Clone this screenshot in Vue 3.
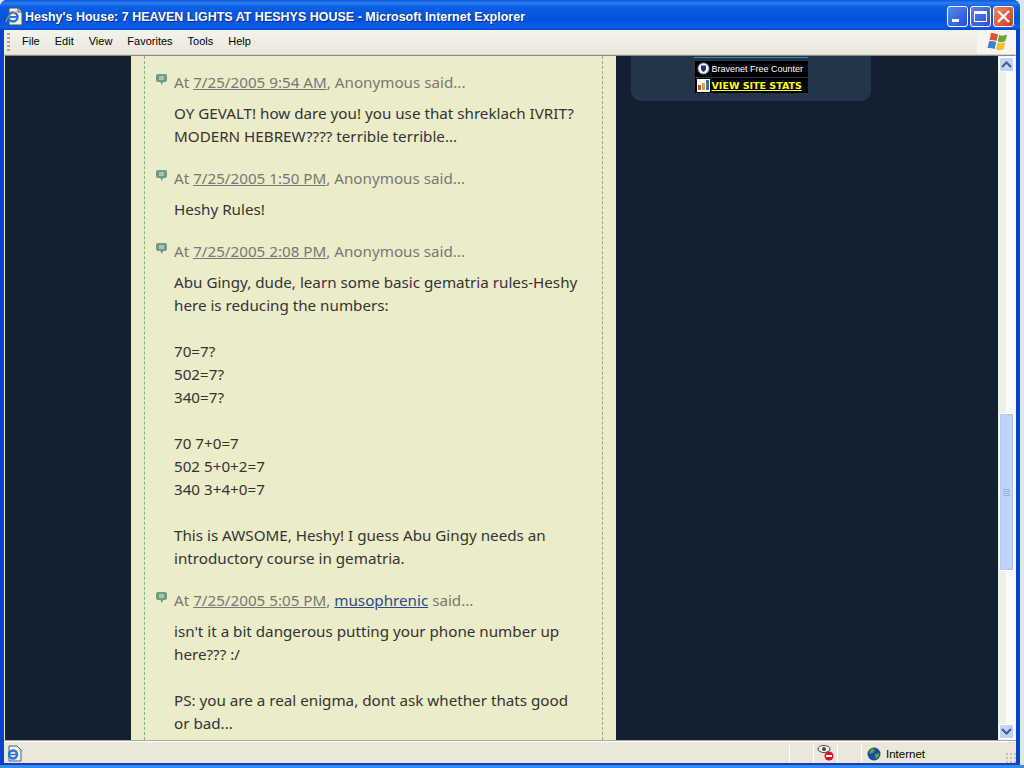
<script setup>
const comments = [
  { time: '7/25/2005 9:54 AM', author: 'Anonymous', lines: ['OY GEVALT! how dare you! you use that shreklach IVRIT?', 'MODERN HEBREW???? terrible terrible...'] },
  { time: '7/25/2005 1:50 PM', author: 'Anonymous', lines: ['Heshy Rules!'] },
  { time: '7/25/2005 2:08 PM', author: 'Anonymous', lines: ['Abu Gingy, dude, learn some basic gematria rules-Heshy', 'here is reducing the numbers:', '', '70=7?', '502=7?', '340=7?', '', '70 7+0=7', '502 5+0+2=7', '340 3+4+0=7', '', 'This is AWSOME, Heshy! I guess Abu Gingy needs an', 'introductory course in gematria.'] },
  { time: '7/25/2005 5:05 PM', author: 'musophrenic', link: true, lines: ["isn't it a bit dangerous putting your phone number up", 'here??? :/', '', 'PS: you are a real enigma, dont ask whether thats good', 'or bad...'] },
]
const menus = ['File', 'Edit', 'View', 'Favorites', 'Tools', 'Help']
</script>

<template>
  <div class="window">
    <div class="frame">
      <header class="titlebar">
        <svg class="ie" width="18" height="19" viewBox="0 0 18 19">
          <path d="M4 1h9l4 4v13H4z" fill="#f6f2df" stroke="#4a4f6a" />
          <path d="M13 1v4h4" fill="#d8d4c0" stroke="#4a4f6a" />
          <circle cx="8" cy="10" r="4.500" fill="none" stroke="#2474e4" stroke-width="2.600" />
          <path d="M3.500 10h9" stroke="#2474e4" stroke-width="1.800" />
          <path d="M1 15q1-7 12-11" fill="none" stroke="#e0a030" stroke-width="1" />
        </svg>
        <span class="title">Heshy's House: 7 HEAVEN LIGHTS AT HESHYS HOUSE - Microsoft Internet Explorer</span>
        <div class="controls">
          <span class="ctl"><i class="min"></i></span>
          <span class="ctl"><i class="max"></i></span>
          <span class="ctl close">
            <svg width="15" height="15" viewBox="0 0 15 15"><path d="M2 2l11 11M13 2L2 13" stroke="#fff" stroke-width="2.400" /></svg>
          </span>
        </div>
      </header>
      <nav class="menubar">
        <span class="grip"></span>
        <span v-for="m in menus" :key="m" class="menu">{{ m }}</span>
        <span class="flag">
          <svg width="22" height="20" viewBox="0 0 22 20">
            <path d="M5 1q3-.5 7 1.500L10.500 9Q7 7.500 3.500 8z" fill="#e5532b" />
            <path d="M13.200 3q3.500 1.500 7.800-.5L19.500 9q-4 2-7.800.5z" fill="#63a93a" />
            <path d="M3.200 9q3.500-.5 7 1L8.700 17Q5 15.500 1.500 16z" fill="#3f7fd6" />
            <path d="M11.500 10.500q3.800 1.500 7.800-.5L17.800 17q-4 2-7.800.5z" fill="#f3c02b" />
          </svg>
        </span>
      </nav>
      <div class="viewport">
        <main class="page">
          <section class="post">
            <div class="dashed">
              <article v-for="c in comments" :key="c.time" class="comment">
                <p class="meta">
                  <svg class="bubble" width="11" height="12" viewBox="0 0 11 12">
                    <path d="M2 0h7a2 2 0 0 1 2 2v4a2 2 0 0 1-2 2H7.500L5.500 11 4.500 8H2a2 2 0 0 1-2-2V2a2 2 0 0 1 2-2z" fill="#6b9f83" />
                    <path d="M3 3h5M3 5h5" stroke="#e3ecd4" />
                  </svg>
                  At <a class="time">{{ c.time }}</a>, <a v-if="c.link" class="author">{{ c.author }}</a><template v-else>{{ c.author }}</template> said...
                </p>
                <p v-for="(l, i) in c.lines" :key="i" class="line">{{ l || '\u00a0' }}</p>
              </article>
            </div>
          </section>
          <aside class="side">
            <div class="box">
              <div class="rule"></div>
              <div class="counter">
                <div class="row">
                  <svg width="13" height="13" viewBox="0 0 13 13">
                    <circle cx="6.500" cy="6.500" r="5.500" fill="#fff" stroke="#888" />
                    <path d="M4 3.500h5v3.500q-.5 2-2.500 3-2-1-2.500-3z" fill="#1b2f86" />
                  </svg>
                  <span>Bravenet Free Counter</span>
                </div>
                <div class="row stats">
                  <svg width="13" height="13" viewBox="0 0 13 13">
                    <rect width="13" height="13" fill="#fff" />
                    <rect x="1" y="6" width="3" height="5" fill="#d8552a" />
                    <rect x="5" y="4" width="3" height="7" fill="#e8a52a" />
                    <rect x="9" y="1" width="3" height="10" fill="#3a6fb8" />
                  </svg>
                  <a>VIEW SITE STATS</a>
                </div>
              </div>
            </div>
          </aside>
        </main>
        <div class="scrollbar">
          <span class="btn"><svg width="11" height="7" viewBox="0 0 11 7"><path d="M1 6l4.500-4.500L10 6" fill="none" stroke="#47598a" stroke-width="2" /></svg></span>
          <div class="track">
            <div class="thumb"><i></i><i></i><i></i><i></i></div>
          </div>
          <span class="btn"><svg width="11" height="7" viewBox="0 0 11 7"><path d="M1 1l4.500 4.500L10 1" fill="none" stroke="#47598a" stroke-width="2" /></svg></span>
        </div>
      </div>
      <footer class="status">
        <svg class="small" width="16" height="17" viewBox="0 0 16 17">
          <path d="M3 1h8l4 4v11H3z" fill="#f6f2df" stroke="#4a5a8a" />
          <circle cx="7" cy="9.500" r="4" fill="none" stroke="#2474e4" stroke-width="2.400" />
          <path d="M3 9.500h8" stroke="#2474e4" stroke-width="1.600" />
        </svg>
        <span class="pane grow"></span>
        <span class="pane w24"></span>
        <span class="pane w24 privacy">
          <svg width="18" height="20" viewBox="0 0 18 20">
            <ellipse cx="7" cy="5" rx="6" ry="3.500" fill="#fff" stroke="#444" />
            <circle cx="7" cy="5" r="2" fill="#444" />
            <circle cx="12" cy="12" r="4.500" fill="#e0102a" />
            <rect x="9" y="11" width="6" height="2" fill="#fff" />
          </svg>
        </span>
        <span class="pane w24"></span>
        <span class="pane internet">
          <svg width="14" height="14" viewBox="0 0 14 14">
            <circle cx="7" cy="7" r="6.500" fill="#1f47a8" />
            <path d="M4 2q3-1 4 1l-2 3-3 1-1-2zM8 7l4-1 0 3-3 3-1-2z" fill="#4fa63a" />
          </svg>
          Internet
        </span>
        <span class="resize"></span>
      </footer>
    </div>
  </div>
</template>

<style>
html, body { margin: 0; padding: 0; overflow: hidden; }
</style>

<style scoped>
.window {
  width: 1024px; height: 768px; box-sizing: border-box; overflow: hidden;
  background: linear-gradient(#3a8ae8, #3a8ae8) left bottom / 100% 3px no-repeat, #dfe3ea;
}
.frame {
  width: 1020px; height: 765px; box-sizing: border-box;
  display: flex; flex-direction: column; overflow: hidden;
  background: #0a3fd0; border-radius: 7px 7px 0 0;
  padding: 0 4px 2px 4px;
}
.titlebar {
  height: 30px; flex: none; margin: 0 -4px; padding: 0 6px 0 5px;
  display: flex; align-items: center; gap: 2px;
  background: linear-gradient(#0a57d8 0, #2a7cf0 3px, #0b5fe4 7px, #0352dc 20px, #0a5ff0 27px, #0346c8 30px);
  box-sizing: border-box;
}
.ie { flex: none; margin-top: 2px; }
.title {
  color: #fff; font: bold 12.500px "Liberation Sans", sans-serif;
  text-shadow: 1px 1px 0 #0a2f90; white-space: nowrap; flex: 1; margin-top: 3px;
}
.controls { display: flex; gap: 2px; margin-top: 2px; }
.ctl {
  width: 21px; height: 21px; box-sizing: border-box; border: 1px solid #fff; border-radius: 3px;
  background: linear-gradient(135deg, #5a86ea, #2450d8); display: flex; align-items: center; justify-content: center; position: relative;
}
.ctl.close { background: linear-gradient(135deg, #ea8a68, #cc3a18); }
.min { width: 7px; height: 3px; background: #fff; position: absolute; left: 4px; bottom: 4px; }
.max { width: 13px; height: 11px; box-sizing: border-box; border: 1px solid #fff; border-top-width: 3px; }
.menubar {
  height: 25px; flex: none; display: flex; align-items: center; position: relative;
  background: linear-gradient(#f4f3ec, #ebe8d9); color: #000; font: 11px "Liberation Sans", sans-serif;
  padding-left: 3px; border-bottom: 1px solid #d8d4c4; padding-bottom: 1px;
  box-sizing: border-box;
}
.grip { width: 3px; height: 18px; margin-right: 12px; background: repeating-linear-gradient(#a8a59a 0 2px, transparent 2px 4px); }
.menu { margin-right: 15px; margin-top: -1px; }
.flag {
  margin-left: auto; width: 39px; height: 24px; background: #f6f5f0;
  display: flex; align-items: center; justify-content: center;
}
.viewport {
  height: 685px; flex: none; display: flex; overflow: hidden; background: #12202f;
  border-top: 1px solid #8a8a82; border-left: 1px solid #e8e6da; border-right: 1px solid #f6f5ef;
  box-sizing: border-box;
}
.page { flex: 1; min-width: 0; display: flex; overflow: hidden; padding-left: 126px; }
.post { width: 485px; flex: none; background: #ececc9; padding: 0 13px; box-sizing: border-box; }
.dashed {
  height: 100%; border: 1px dashed #6fb98a; border-width: 0 1px; padding: 15px 18px 0 29px; box-sizing: border-box; overflow: hidden;
}
.comment { margin-bottom: 19px; font: 15.200px/23px "Noto Sans", "Open Sans", sans-serif; color: #333; }
.comment p { margin: 0; white-space: nowrap; }
.meta { color: #777; margin-bottom: 8px !important; position: relative; }
.bubble { position: absolute; left: -18px; top: 3px; }
.time { color: #777; text-decoration: underline; }
.author { color: #2a4a8a; text-decoration: underline; }
.side { margin-left: 15px; width: 240px; flex: none; }
.box {
  height: 45px; background: #24354a; border-radius: 0 0 10px 10px; display: flex; flex-direction: column; align-items: center;
}
.rule { width: 114px; height: 1px; background: #3a8ab0; margin-top: 1px; }
.counter { width: 113px; height: 32px; margin-top: 3px; background: #000; display: flex; flex-direction: column; }
.row { display: flex; align-items: center; gap: 2px; padding-left: 2px; height: 16px; color: #fff; font: 9px "Liberation Sans", sans-serif; white-space: nowrap; }
.row.stats { border-top: 1px solid #24354a; }
.stats a { color: #ff0; font: bold 9.500px "DejaVu Sans", sans-serif; text-decoration: underline; }
.scrollbar { width: 17px; flex: none; background: linear-gradient(90deg, #f0efe8 0 50%, #fafaf6 50%); display: flex; flex-direction: column; padding: 1px 0; box-sizing: border-box; }
.btn {
  height: 15px; width: 15px; margin: 0 1px; flex: none; box-sizing: border-box; border: 1px solid #fff; border-radius: 2px; background: #c2d3fb;
  display: flex; align-items: center; justify-content: center;
}
.track { flex: 1; padding-top: 341px; }
.thumb {
  width: 15px; height: 158px; margin: 0 1px; box-sizing: border-box; border: 1px solid #fff; border-radius: 2px; background: #c2d3fb; box-shadow: inset 0 0 0 1px #b4c8f8;
  display: flex; flex-direction: column; align-items: center; justify-content: center; gap: 1px;
}
.thumb i { width: 7px; height: 1px; background: #8eaef5; }
.status {
  height: 23px; flex: none; display: flex; align-items: center; background: #ebe8d9; font: 11.500px "Liberation Sans", sans-serif; color: #000; box-sizing: border-box;
  border-top: 1px solid #aca899; box-shadow: inset 0 1px 0 #fff; position: relative; padding-top: 3px;
}
.small { margin-left: 2px; flex: none; }
.pane { height: 18px; border-left: 1px solid #fff; display: flex; align-items: center; box-sizing: border-box; }
.pane.grow { flex: 1; border-left: 0; }
.w24 { width: 24px; justify-content: center; flex: none; }
.internet { width: 155px; padding-left: 5px; gap: 5px; flex: none; }
.resize { position: absolute; right: 0; bottom: 0; width: 11px; height: 11px; background: radial-gradient(circle, #c4c0ae 1px, transparent 1.200px) 0 0 / 4px 4px; }
</style>
